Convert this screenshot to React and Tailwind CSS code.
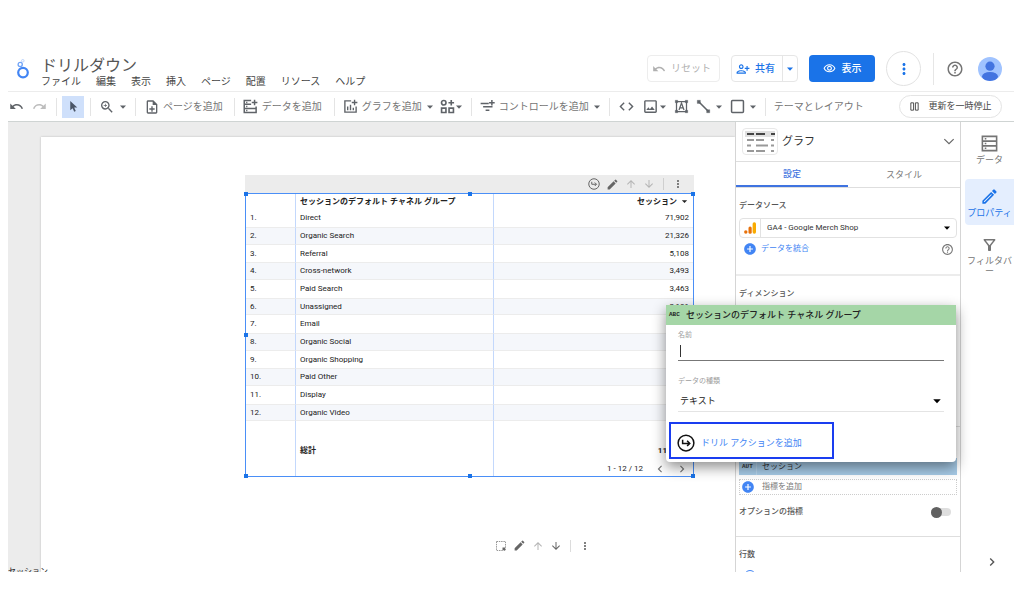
import React, { useState } from "react";
import {
  MdUndo,
  MdRedo,
  MdZoomIn,
  MdOutlineNoteAdd,
  MdCode,
  MdOutlineImage,
  MdOutlineVisibility,
  MdMoreVert,
  MdHelpOutline,
  MdEdit,
  MdOutlineEdit,
  MdArrowUpward,
  MdArrowDownward,
  MdOutlineFilterAlt,
  MdAddCircle,
  MdPersonAddAlt,
  MdChevronLeft,
  MdChevronRight,
} from "react-icons/md";

const menus = ["ファイル", "編集", "表示", "挿入", "ページ", "配置", "リソース", "ヘルプ"];

const rows = [
  ["Direct", "71,902"],
  ["Organic Search", "21,326"],
  ["Referral", "5,108"],
  ["Cross-network", "3,493"],
  ["Paid Search", "3,463"],
  ["Unassigned", "2,181"],
  ["Email", ""],
  ["Organic Social", ""],
  ["Organic Shopping", ""],
  ["Paid Other", ""],
  ["Display", ""],
  ["Organic Video", ""],
];

/* Icons */

const Caret = ({ className = "w-2" }) => (
  <svg viewBox="0 0 8 8" className={`shrink-0 ${className}`} fill="currentColor">
    <path d="M1 2.5h6L4 5.8z" />
  </svg>
);

const Line = ({ className, children, width = 2 }) => (
  <svg
    viewBox="0 0 24 24"
    className={`shrink-0 ${className}`}
    fill="none"
    stroke="currentColor"
    strokeWidth={width}
  >
    {children}
  </svg>
);

const LogoIcon = () => (
  <svg viewBox="0 0 14 22" className="w-[14px] h-[22px] shrink-0" fill="none">
    <circle cx="7" cy="14.6" r="4.8" stroke="#4285f4" strokeWidth="2.2" />
    <circle cx="4.2" cy="6.5" r="2.1" stroke="#6fa3f7" strokeWidth="1.3" />
    <circle cx="6.8" cy="2.8" r="1.3" stroke="#b5cffb" strokeWidth="0.9" />
  </svg>
);

const CursorIcon = () => (
  <svg viewBox="0 0 24 24" className="w-[13px]" fill="#4a5568">
    <path d="M6 2v17l4.4-4 2.9 6.6 2.9-1.3-2.9-6.4H19z" />
  </svg>
);

const DataIcon = () => (
  <Line className="w-[15px]" width={2.4}>
    <path d="M13 2.500H2v6h11M2 8.500v13h19V12M2 15h19M18.500 1v9M14 5.500h9" />
    <path d="M5 5.500h2M5 11.800h2M5 18.300h2" />
  </Line>
);

const ChartIcon = () => (
  <Line className="w-[15px]" width={2.2}>
    <path d="M13 3H3v18h18v-9M18.500 1v9M14 5.500h9M7.500 18v-6M12 18V9M16.500 18v-4" />
  </Line>
);

const WidgetsIcon = () => (
  <Line className="w-[15px]" width={2.6}>
    <circle cx="6" cy="6" r="3.600" />
    <path d="M18 1.500v9M13.500 6h9M2.500 14.500h7v7h-7zM14.500 14.500h7v7h-7z" />
  </Line>
);

const ControlIcon = () => (
  <Line className="w-[15px]" width={2.4}>
    <path d="M1 7h13M5 12.500h15M9 18h6M19 1.500v9M14.500 6h9" />
  </Line>
);

const TextBoxIcon = () => (
  <Line className="w-[15px]">
    <path d="M4 4h16v16H4z" />
    <path d="M2 2h4v4H2zM18 2h4v4h-4zM2 18h4v4H2zM18 18h4v4h-4z" fill="currentColor" strokeWidth="0.5" />
    <path d="M8 17.500l4-11 4 11M9.500 14h5" />
  </Line>
);

const LineIcon = () => (
  <Line className="w-[15px]" width={2.6}>
    <path d="M4 4l16 16" />
    <path d="M2 2h5v5H2zM17 17h5v5h-5z" fill="currentColor" strokeWidth="0.5" />
  </Line>
);

const SquareIcon = () => (
  <Line className="w-[15px]" width={2.4}>
    <rect x="2.500" y="2.500" width="19" height="19" rx="1.500" />
  </Line>
);

const PauseIcon = () => (
  <Line className="w-[11px]">
    <path d="M4 4h6v16H4zM14 4h6v16h-6z" />
  </Line>
);

const ResetIcon = () => (
  <svg viewBox="0 0 24 24" className="w-[14px]" fill="currentColor">
    <path d="M12.500 8c-2.650 0-5.050.99-6.900 2.600L2 7v9h9l-3.620-3.620c1.390-1.160 3.160-1.880 5.120-1.880 3.540 0 6.550 2.310 7.600 5.500l2.370-.78C21.080 11.030 17.150 8 12.500 8z" />
  </svg>
);

const DrillIcon = ({ className }) => (
  <Line className={className} width={2}>
    <circle cx="12" cy="12" r="10.500" />
    <path d="M7.500 7.500v5h9M13.500 9l3.500 3.500-3.500 3.500" />
  </Line>
);

const ServerIcon = () => (
  <Line className="w-[19px]" width={2}>
    <path d="M3 3h18v18H3zM3 9h18M3 15h18M6 6h2M6 12h2M6 18h2" />
  </Line>
);

const SelectAreaIcon = () => (
  <svg viewBox="0 0 12 12" className="w-3" fill="none">
    <rect x="1.500" y="1.500" width="9" height="9" stroke="#999" strokeDasharray="1.500 0.800" />
    <path d="M7.500 7.500H10V10H7.500z" fill="#666" />
  </svg>
);

const AnalyticsIcon = () => (
  <svg viewBox="0 0 12 12" className="w-3 shrink-0">
    <circle cx="1.800" cy="10" r="1.700" fill="#e8710a" />
    <rect x="4.500" y="4.500" width="3.200" height="7.200" rx="1.500" fill="#e8710a" />
    <rect x="8.600" y="0.300" width="3.400" height="11.400" rx="1.600" fill="#f9ab00" />
  </svg>
);

const TableThumb = () => (
  <svg viewBox="0 0 30 22" className="w-[30px]">
    <path d="M0 0h30v6H0z" fill="#e0e0e0" />
    <path d="M2 3h7M11 3h9M26 3h4" stroke="#444" strokeWidth="2" />
    <path
      d="M2 9h7M11 9h8M26 9h3M2 14.500h4M11 14.500h12M26 14.500h3M2 20h7M11 20h9M26 20h3"
      stroke="#999"
      strokeWidth="2"
    />
  </svg>
);

const Avatar = () => (
  <svg viewBox="0 0 24 24" className="w-6">
    <clipPath id="avatar">
      <circle cx="12" cy="12" r="12" />
    </clipPath>
    <g clipPath="url(#avatar)">
      <path d="M0 0h24v24H0z" fill="#a0c3ff" />
      <circle cx="12" cy="9.200" r="4.600" fill="#4374e0" />
      <ellipse cx="12" cy="19.500" rx="8" ry="4.500" fill="#4374e0" />
    </g>
  </svg>
);

/* Header and toolbar */

const Header = () => (
  <header className="flex items-center h-[48px] pt-[2px] border-b border-[#ececec] pl-2">
    <LogoIcon />
    <div className="ml-[11px] flex-1 min-w-0 pt-2">
      <h1 className="text-[16px] leading-[18px] text-[#555]">ドリルダウン</h1>
      <nav className="flex gap-[15px] text-[10px] leading-[14px] text-[#444]">
        {menus.map((menu) => (
          <button key={menu} className="whitespace-nowrap">
            {menu}
          </button>
        ))}
      </nav>
    </div>

    <div className="flex items-center shrink-0 text-[10px]">
      <button className="flex items-center gap-[5px] h-[27px] w-[73px] pl-1 border border-[#ededed] rounded-sm text-[#b0b0b0]">
        <ResetIcon />
        リセット
      </button>

      <div className="ml-[11px] flex h-[27px] w-[67px] border border-[#e6e6e6] rounded-sm text-[#1a73e8]">
        <button className="flex-1 flex items-center gap-[5px] pl-1 font-medium">
          <MdPersonAddAlt size={14} />
          共有
        </button>
        <button aria-label="共有オプション" className="w-[15px] border-l border-[#e6e6e6] flex items-center justify-center">
          <Caret />
        </button>
      </div>

      <button className="ml-[11px] flex items-center justify-center gap-[6px] h-[27px] w-[66px] rounded-sm bg-[#1a73e8] text-white font-medium">
        <MdOutlineVisibility size={13} />
        表示
      </button>

      <button
        aria-label="その他"
        className="ml-[11px] size-[35px] rounded-full border border-[#e2e2e2] flex items-center justify-center text-[#1a73e8]"
      >
        <MdMoreVert size={18} />
      </button>

      <div className="ml-3 h-8 border-l border-[#e6e6e6]" />
      <button aria-label="ヘルプ" className="ml-3 text-[#757575]">
        <MdHelpOutline size={18} />
      </button>
      <button aria-label="アカウント" className="ml-[14px] mr-3">
        <Avatar />
      </button>
    </div>
  </header>
);

const Group = ({ className, children }) => (
  <div className={`flex items-center h-[18px] shrink-0 border-l border-[#e4e4e4] ${className}`}>{children}</div>
);

const Tool = ({ label, text, caret, className = "gap-1", children }) => (
  <button aria-label={label} className={`flex items-center shrink-0 whitespace-nowrap ${className}`}>
    {children}
    {text && <span className="text-[#757575]">{text}</span>}
    {caret && <Caret />}
  </button>
);

const Toolbar = () => (
  <div className="flex items-center h-[30px] border-b border-[#cfd4d3] text-[10px] text-[#5f6368]">
    <div className="flex items-center gap-2 pl-[1px] pr-[9px]">
      <Tool label="元に戻す">
        <MdUndo size={15} />
      </Tool>
      <Tool label="やり直す" className="text-[#bdbdbd]">
        <MdRedo size={15} />
      </Tool>
    </div>
    <Group className="pl-[5px] pr-[6px]">
      <button aria-label="選択" className="size-[22px] bg-[#cfe0fb] flex items-center justify-center">
        <CursorIcon />
      </button>
    </Group>
    <Group className="px-2">
      <Tool label="ズーム" caret>
        <MdZoomIn size={16} />
      </Tool>
    </Group>
    <Group className="pl-2 pr-[11px]">
      <Tool text="ページを追加" className="gap-[3px]">
        <MdOutlineNoteAdd size={16} />
      </Tool>
    </Group>
    <Group className="pl-2 pr-3">
      <Tool text="データを追加">
        <DataIcon />
      </Tool>
    </Group>
    <Group className="px-2 gap-[6px]">
      <Tool text="グラフを追加" caret>
        <ChartIcon />
      </Tool>
      <Tool label="コミュニティ" caret className="gap-0">
        <WidgetsIcon />
      </Tool>
    </Group>
    <Group className="px-2">
      <Tool text="コントロールを追加" caret>
        <ControlIcon />
      </Tool>
    </Group>
    <Group className="px-2 gap-[7px]">
      <Tool label="埋め込み">
        <MdCode size={17} />
      </Tool>
      <Tool label="画像" caret className="gap-0">
        <MdOutlineImage size={17} />
      </Tool>
      <Tool label="テキスト">
        <TextBoxIcon />
      </Tool>
      <Tool label="線" caret>
        <LineIcon />
      </Tool>
      <Tool label="図形" caret>
        <SquareIcon />
      </Tool>
    </Group>
    <Group className="pl-2">
      <Tool text="テーマとレイアウト" />
    </Group>
    <button className="ml-auto mr-3 shrink-0 flex items-center justify-center gap-2 h-[23px] w-[103px] rounded-full border border-[#e4e4e4] text-[9px] text-[#444]">
      <PauseIcon />
      更新を一時停止
    </button>
  </div>
);

/* Report canvas */

const Handle = ({ className }) => <span className={`absolute size-1 bg-[#1a73e8] ${className}`} />;

const ReportTable = () => (
  <div className="w-[449px]">
    <div className="flex items-center justify-end h-[18px] bg-[#ececec] pr-[10px] text-[#666]">
      <button aria-label="ドリルダウン">
        <DrillIcon className="w-3" />
      </button>
      <button aria-label="編集" className="ml-[6px]">
        <MdEdit size={13} />
      </button>
      <button aria-label="上へ" className="ml-[6px] text-[#b5b5b5]">
        <MdArrowUpward size={12} />
      </button>
      <button aria-label="下へ" className="ml-[6px] text-[#b5b5b5]">
        <MdArrowDownward size={12} />
      </button>
      <div className="ml-2 h-3 border-l border-[#cfcfcf]" />
      <button aria-label="その他" className="ml-2">
        <MdMoreVert size={12} />
      </button>
    </div>

    <div className="relative border border-[#4a8ff7]">
      <table className="w-full table-fixed border-separate border-spacing-0 text-[8px] leading-[14px] text-[#222]">
        <colgroup>
          <col className="w-[50px]" />
          <col className="w-[198px]" />
          <col />
        </colgroup>
        <thead>
          <tr className="h-[15px]">
            <th className="border-r border-r-[#c3d8fc]" />
            <th className="border-r border-r-[#c3d8fc] text-left pl-1 font-bold">
              セッションのデフォルト チャネル グループ
            </th>
            <th className="font-bold pr-[5px]">
              <span className="flex items-center justify-end gap-1">
                セッション
                <Caret className="w-[7px]" />
              </span>
            </th>
          </tr>
        </thead>
        <tbody>
          {rows.map(([name, value], i) => (
            <tr
              key={name}
              className="h-[18px] nth-[3n]:h-[17px] even:bg-[#f5f7fb] even:*:border-y *:border-y-[#ececec]"
            >
              <td className="border-r border-r-[#c3d8fc] pl-1">{i + 1}.</td>
              <td className="border-r border-r-[#c3d8fc] pl-1">{name}</td>
              <td className="text-right pr-1">{value}</td>
            </tr>
          ))}
        </tbody>
        <tfoot className="align-bottom font-bold">
          <tr className="h-[37px]">
            <td className="border-r border-r-[#c3d8fc]" />
            <td className="border-r border-r-[#c3d8fc] pl-1">総計</td>
            <td className="text-right pr-[26px]">11</td>
          </tr>
          <tr className="h-[18px]">
            <td className="border-r border-r-[#c3d8fc]" />
            <td className="border-r border-r-[#c3d8fc]" />
            <td className="pr-1 font-normal">
              <div className="flex items-center justify-end">
                1 - 12 / 12
                <button aria-label="前へ" className="ml-[10px] text-[#757575]">
                  <MdChevronLeft size={14} />
                </button>
                <button aria-label="次へ" className="ml-2 text-[#757575]">
                  <MdChevronRight size={14} />
                </button>
              </div>
            </td>
          </tr>
        </tfoot>
      </table>
      <Handle className="-left-[2px] -top-[2px]" />
      <Handle className="inset-x-0 mx-auto -top-[2px]" />
      <Handle className="-right-[2px] -top-[2px]" />
      <Handle className="-left-[2px] inset-y-0 my-auto" />
      <Handle className="-left-[2px] -bottom-[2px]" />
      <Handle className="inset-x-0 mx-auto -bottom-[2px]" />
      <Handle className="-right-[2px] -bottom-[2px]" />
    </div>
  </div>
);

const Canvas = () => (
  <main className="relative flex-1 min-w-0 overflow-hidden bg-[#ececec] pl-[33px] pt-[15px]">
    <div className="h-full bg-white pl-[204px] pt-[38px] shadow-[0_0_2px_#bbb]">
      <ReportTable />
      <div className="ml-[250px] mt-[62px] flex items-center text-[#666]">
        <button aria-label="選択">
          <SelectAreaIcon />
        </button>
        <button aria-label="編集" className="ml-[6px]">
          <MdEdit size={13} />
        </button>
        <button aria-label="上へ" className="ml-[6px] text-[#b5b5b5]">
          <MdArrowUpward size={12} />
        </button>
        <button aria-label="下へ" className="ml-[6px]">
          <MdArrowDownward size={12} />
        </button>
        <div className="ml-2 h-3 border-l border-[#dcdcdc]" />
        <button aria-label="その他" className="ml-2">
          <MdMoreVert size={12} />
        </button>
      </div>
    </div>
    {/* drag label, cut off by the bottom edge */}
    <span className="absolute left-0 -bottom-[6px] text-[8px] leading-[12px] text-[#222]">セッション</span>
  </main>
);

/* Field editor popup */

const FieldPopup = () => {
  const [name, setName] = useState("");

  return (
    <div className="absolute z-10 right-1 top-[183px] w-[290px] h-[157px] bg-white rounded-b-sm shadow-[0_5px_14px_rgba(0,0,0,0.45)]">
      <div className="flex items-center h-5 bg-[#a5d6a7] pl-[3px] text-[#222]">
        <span className="w-[17px] font-mono font-bold text-[6px]">ABC</span>
        <span className="text-[9px] font-medium">セッションのデフォルト チャネル グループ</span>
      </div>

      <div className="px-3">
        <label htmlFor="field-name" className="block pt-1 text-[7px] leading-[12px] text-[#9e9e9e]">
          名前
        </label>
        <div className="flex items-center h-5 pl-[2px] border-b border-[#777]">
          <span className="w-px h-3 bg-[#333]" />
          <input
            id="field-name"
            value={name}
            onChange={(e) => setName(e.target.value)}
            className="flex-1 text-[9px] outline-none caret-transparent"
          />
        </div>

        <label htmlFor="field-type" className="block mt-[14px] text-[7px] leading-[12px] text-[#9e9e9e]">
          データの種類
        </label>
        <div className="flex items-end h-[25px] pb-1 pr-[2px] border-b border-[#e4e4e4] text-black">
          <select id="field-type" className="flex-1 appearance-none pl-[2px] text-[9px] text-[#222] outline-none">
            <option>テキスト</option>
          </select>
          <Caret className="w-[10px] mb-px" />
        </div>
      </div>

      <button className="mt-[10px] ml-[3px] flex items-center gap-[6px] w-[165px] h-[37px] pt-1 pl-[6px] border-2 border-[#1a3df0] text-[9px] text-[#4285f4]">
        <DrillIcon className="w-[18px] text-[#111]" />
        ドリル アクションを追加
      </button>
    </div>
  );
};

/* Properties panel */

const PropertiesPanel = () => {
  const [optional, setOptional] = useState(false);

  return (
    <aside className="relative shrink-0 w-[226px] bg-white border-x border-[#d5d5d5] text-[8px] leading-[12px] text-[#555]">
      <div className="h-full overflow-hidden">
        <div className="flex items-center h-[39px] pl-[6px] pr-1">
          <div className="w-9 h-[27px] border border-[#e8e8e8] rounded-sm flex items-center justify-center">
            <TableThumb />
          </div>
          <h2 className="flex-1 ml-1 text-[11px] text-[#333]">グラフ</h2>
          <button aria-label="グラフの種類">
            <Line className="w-[14px] text-[#666]">
              <path d="M4 7l8 8 8-8" />
            </Line>
          </button>
        </div>

        <div role="tablist" className="flex h-[27px] border-y border-[#dedede] text-[9px]">
          <button role="tab" aria-selected="true" className="flex-1 border-b-2 border-[#3f73e0] text-[#3f73e0] font-medium">
            設定
          </button>
          <button role="tab" aria-selected="false" className="flex-1 text-[#777]">
            スタイル
          </button>
        </div>

        <section className="px-[3px] pt-3 h-[88px] border-b-2 border-[#ececec]">
          <label htmlFor="source" className="block font-medium">
            データソース
          </label>
          <div className="mt-[6px] flex items-center h-5 pl-1 pr-[5px] border border-[#e2e2e2] rounded-sm">
            <AnalyticsIcon />
            <select
              id="source"
              className="flex-1 h-full ml-1 pl-[6px] border-l border-[#e2e2e2] appearance-none text-[8px] text-[#333] outline-none"
            >
              <option>GA4 - Google Merch Shop</option>
            </select>
            <Caret className="w-2 text-black" />
          </div>
          <div className="mt-1 flex items-center justify-between pl-1 pr-[3px]">
            <button className="flex items-center gap-1 text-[#4285f4]">
              <MdAddCircle size={14} />
              データを統合
            </button>
            <button aria-label="ヘルプ" className="text-[#777]">
              <MdHelpOutline size={13} />
            </button>
          </div>
        </section>

        <section className="px-[3px] pt-3 h-[151px] border-b border-[#dedede]">
          <h3 className="font-medium">ディメンション</h3>
        </section>

        <section aria-label="指標" className="px-[3px] pt-[31px] h-[110px] border-b border-[#dedede]">
          <div className="flex items-center h-[17px] bg-[#a6cae6] text-[#333]">
            <span className="w-[18px] pl-[3px] h-full border-r border-[#b8d5ec] font-mono font-bold text-[6px] leading-[17px]">
              AUT
            </span>
            <span className="ml-[5px]">セッション</span>
          </div>
          <button className="mt-1 w-full flex items-center gap-[7px] h-4 pl-[1px] border border-dotted border-[#ccc] text-[#777]">
            <MdAddCircle size={14} className="text-[#4285f4]" />
            指標を追加
          </button>
          <label className="mt-[11px] flex items-center justify-between pr-[6px] font-medium">
            オプションの指標
            <input
              type="checkbox"
              checked={optional}
              onChange={(e) => setOptional(e.target.checked)}
              className="sr-only peer"
            />
            <span className="flex items-center w-5 h-2 rounded-full bg-[#dedede] peer-checked:justify-end">
              <span className="size-[11px] shrink-0 rounded-full bg-[#616161]" />
            </span>
          </label>
        </section>

        <section className="px-[3px] pt-3">
          <h3 className="font-medium">行数</h3>
          <input type="radio" defaultChecked aria-label="行数" className="block ml-[5px] mt-[9px] size-3 accent-[#4285f4]" />
        </section>
      </div>
      <FieldPopup />
    </aside>
  );
};

const RailItem = ({ active, label, children }) => (
  <button
    className={`flex flex-col items-center w-full h-[46px] text-[9px] leading-[10px] break-all ${
      active ? "pt-2 rounded-l-sm bg-[#e4eefe] text-[#1a73e8]" : "pt-[6px] text-[#757575]"
    }`}
  >
    {children}
    <span className="mt-[2px]">{label}</span>
  </button>
);

const SideRail = () => (
  <nav className="shrink-0 w-[53px] pl-1 flex flex-col items-center pt-[6px] gap-[5px]">
    <RailItem label="データ">
      <ServerIcon />
    </RailItem>
    <RailItem label="プロパティ" active>
      <MdOutlineEdit size={19} />
    </RailItem>
    <RailItem label="フィルタバー">
      <MdOutlineFilterAlt size={19} />
    </RailItem>
    <button aria-label="閉じる" className="mt-auto mb-[2px] ml-1 text-[#555]">
      <MdChevronRight size={16} />
    </button>
  </nav>
);

const App = () => {
  return (
    <div className="h-screen flex flex-col bg-white pt-11 pb-[42px] pl-2 pr-[10px] font-[Roboto,'Noto_Sans_CJK_JP',sans-serif]">
      <Header />
      <Toolbar />
      <div className="flex flex-1 min-h-0">
        <Canvas />
        <PropertiesPanel />
        <SideRail />
      </div>
    </div>
  );
};

export default App;
